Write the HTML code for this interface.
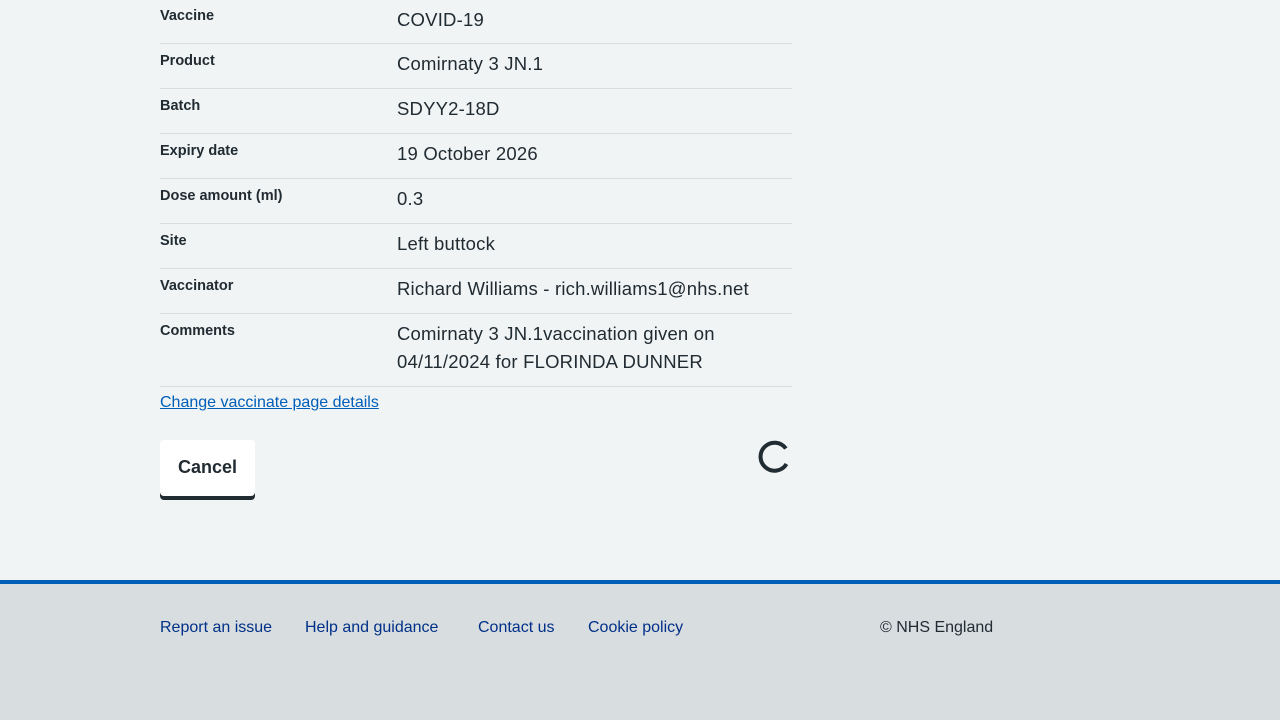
<!DOCTYPE html>
<html><head><style>
*{margin:0;padding:0;box-sizing:border-box}
body{width:1280px;height:720px;background:#f0f4f5;font-family:"Liberation Sans",sans-serif;color:#212b32;position:relative;overflow:hidden}
.row{position:absolute;left:160px;width:632px;border-bottom:1px solid #d8dde0}
.k{position:absolute;left:0;top:9px;font-size:14.5px;font-weight:bold}
.v{position:absolute;left:237px;top:6px;font-size:18.5px;line-height:28px;width:395px;letter-spacing:0.2px}
a{color:#005eb8;text-decoration:underline}
.foot{position:absolute;left:0;top:580px;width:1280px;height:140px;background:#d8dde0;border-top:4px solid #005eb8}
.foot span{position:absolute;top:35px;font-size:16px;color:#003087}
</style></head><body>
<div class="row" style="top:0;height:44px"><div class="k" style="top:8px">Vaccine</div><div class="v">COVID-19</div></div>
<div class="row" style="top:44px;height:45px"><div class="k">Product</div><div class="v">Comirnaty 3 JN.1</div></div>
<div class="row" style="top:89px;height:45px"><div class="k">Batch</div><div class="v">SDYY2-18D</div></div>
<div class="row" style="top:134px;height:45px"><div class="k">Expiry date</div><div class="v">19 October 2026</div></div>
<div class="row" style="top:179px;height:45px"><div class="k">Dose amount (ml)</div><div class="v">0.3</div></div>
<div class="row" style="top:224px;height:45px"><div class="k">Site</div><div class="v">Left buttock</div></div>
<div class="row" style="top:269px;height:45px"><div class="k">Vaccinator</div><div class="v">Richard Williams - rich.williams1@nhs.net</div></div>
<div class="row" style="top:314px;height:73px"><div class="k">Comments</div><div class="v">Comirnaty 3 JN.1vaccination given on 04/11/2024 for FLORINDA DUNNER</div></div>
<a style="position:absolute;left:160px;top:394px;font-size:16px">Change vaccinate page details</a>
<div style="position:absolute;left:160px;top:440px;width:95px;height:56px;background:#fff;border-radius:4px;box-shadow:0 4px 0 #212b32;font-weight:bold;font-size:18px;text-align:center;line-height:54px">Cancel</div>
<svg style="position:absolute;left:758px;top:439px" width="34" height="34" viewBox="0 0 34 34"><path d="M27.9 9.5 A14 14 0 1 0 28.5 25" fill="none" stroke="#212b32" stroke-width="4"/></svg>
<div class="foot">
<span style="left:160px">Report an issue</span>
<span style="left:305px">Help and guidance</span>
<span style="left:478px">Contact us</span>
<span style="left:588px">Cookie policy</span>
<span style="left:880px;color:#212b32">© NHS England</span>
</div>
</body></html>
